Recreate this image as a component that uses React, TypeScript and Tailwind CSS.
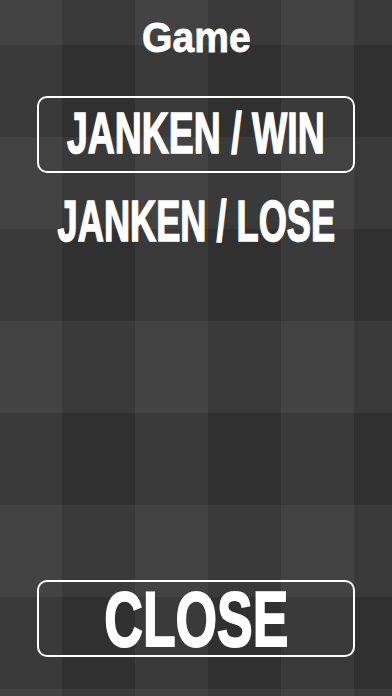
import React from "react";

const FONT = "font-['Liberation_Sans',Arial,sans-serif]";

const bgPlaid =
  "bg-[#303030] bg-[repeating-linear-gradient(90deg,rgba(255,255,255,0.048)_-11px,rgba(255,255,255,0.048)_62px,transparent_62px,transparent_135px),repeating-linear-gradient(180deg,rgba(255,255,255,0.048)_-47px,rgba(255,255,255,0.048)_45px,transparent_45px,transparent_137px)]";

// condensed heavy look: squeeze horizontally and thicken with a stroke
const HEAVY = "[-webkit-text-stroke:1.6px_white]";

export default function App() {
  return (
    <div className={`h-[696px] w-full flex flex-col items-center px-[37px] text-white ${bgPlaid} ${FONT}`}>
      {/* Title */}
      <div className="h-[76px] w-full flex items-center justify-center">
        <span className="inline-block text-[42px] leading-none font-bold scale-x-[0.93] [-webkit-text-stroke:0.8px_white]">Game</span>
      </div>

      {/* Selected game */}
      <button className="mt-[20px] h-[77px] w-full flex items-center justify-center border-2 border-white rounded-[10px]">
        <span className={`inline-block text-[58px] leading-none font-bold scale-x-[0.645] -translate-y-[2px] whitespace-nowrap ${HEAVY}`}>
          JANKEN / WIN
        </span>
      </button>

      <button className="mt-[9px] h-[77px] w-full flex items-center justify-center border-2 border-transparent rounded-[10px]">
        <span className={`inline-block text-[58px] leading-none font-bold scale-x-[0.624] whitespace-nowrap ${HEAVY}`}>
          JANKEN / LOSE
        </span>
      </button>

      <div className="flex-1" />

      {/* Close */}
      <button className="mb-[39px] h-[77px] w-full flex items-center justify-center border-2 border-white rounded-[10px]">
        <span className="inline-block text-[78px] leading-none font-bold scale-x-[0.685] whitespace-nowrap [-webkit-text-stroke:2px_white]">CLOSE</span>
      </button>
    </div>
  );
}
